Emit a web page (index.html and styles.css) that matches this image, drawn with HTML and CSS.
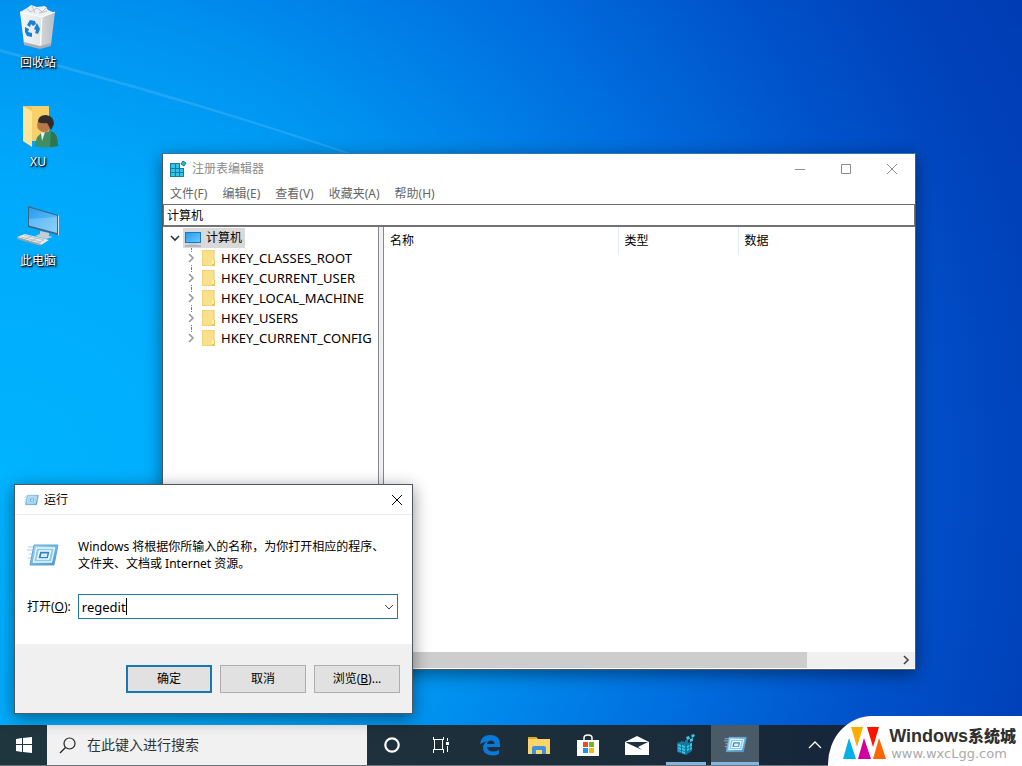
FILE: index.html
```html
<!DOCTYPE html>
<html lang="zh-CN">
<head>
<meta charset="utf-8">
<title>注册表编辑器</title>
<link rel="stylesheet" href="styles.css">
</head>
<body>
<svg class="defs" width="0" height="0" aria-hidden="true">
  <defs>
    <linearGradient id="screen" x1="0" y1="0" x2="1" y2="1"><stop offset="0" stop-color="#2a9df0"/><stop offset="1" stop-color="#6cc6fb"/></linearGradient>
    <linearGradient id="bin" x1="0" y1="0" x2="1" y2="0"><stop offset="0" stop-color="#f3f5f7"/><stop offset=".62" stop-color="#e3e6e9"/><stop offset=".64" stop-color="#cfd3d6"/><stop offset="1" stop-color="#b9bec2"/></linearGradient>
    <linearGradient id="runfill" x1="0" y1="0" x2="1" y2="1"><stop offset="0" stop-color="#a9dbf3"/><stop offset="1" stop-color="#3f93cf"/></linearGradient>
    <symbol id="run" viewBox="0 0 32 22">
      <path d="M1 3h7M0 6h6M2 10h5M1 14h4" stroke="#a5cfe8" stroke-width="1"/>
      <path d="M7 1h24l-4 20H3z" fill="url(#runfill)" stroke="#5ba6d6"/>
      <path d="M9.500 4h18l-3 14H6.500z" fill="#8cc8ea" stroke="#e9f7fd" stroke-width="1.300"/>
      <path d="M12.500 7h11l-2 8h-11z" fill="#2f86c6" stroke="#f2fbff" stroke-width="1.600"/>
      <path d="M14.500 9.500h6l-.8 3.500h-6z" fill="#d8f0fb"/>
    </symbol>
    <symbol id="folder" viewBox="0 0 14 16"><path d="M0 0h12v10h1v6H0z" fill="#fae08a"/><path d="M0 0h12v16H0z" fill="none" stroke="#ecc75f"/><path d="M10 10h3v6h-3z" fill="#eac558"/><path d="M10 10h2v4h-2z" fill="#fff0b0"/></symbol>
    <symbol id="cross" viewBox="0 0 12 12"><path d="M1 1l10 10M11 1L1 11" stroke="currentColor" fill="none"/></symbol>
    <symbol id="right" viewBox="0 0 8 10"><path d="M2 1l4 4-4 4" fill="none" stroke="currentColor" stroke-width="1.600"/></symbol>
    <symbol id="down" viewBox="0 0 10 8"><path d="M1 2l4 4 4-4" fill="none" stroke="currentColor" stroke-width="1.600"/></symbol>
  </defs>
</svg>

<main class="desktop">
  <svg class="beam" viewBox="0 0 500 200" width="500" height="200" aria-hidden="true"><path d="M0 49Q180 95 360 156L500 204 360 158Q180 98 0 52z" fill="#fff" opacity=".12"/></svg>

  <nav class="shortcuts" aria-label="桌面">
    <button class="shortcut">
      <svg width="42" height="46" viewBox="0 0 42 46">
        <path d="M3 8l7-4 4-3 6 2 8-1 3 4 7 3-4 7H8z" fill="#edf0f2"/><path d="M10 5l4 3 6-4 5 4 5-5M15 2l3 7M22 9l8-2" stroke="#bcc3c8" fill="none"/>
        <path d="M3 8l22 5 13-5-4 33-11 3-16-4z" fill="url(#bin)"/><path d="M3 8l22 5 13-5M25 13l-2 31" fill="none" stroke="#fff"/>
        <path d="M7 38l16 4 11-3v3l-11 3-16-4z" fill="#a9afb4"/>
        <g fill="#1681d4"><path d="M10 21l3-5 5 1 1 3-3 2-2-2-1 3z"/><path d="M20 19l3 6-2 5-3-1 1-3-2-1z"/><path d="M8 23l4 2-1 3 4 1v4l-5-1-2-4z"/></g>
      </svg>
      <span>回收站</span>
    </button>
    <button class="shortcut">
      <svg width="42" height="46" viewBox="0 0 42 46">
        <path d="M7 3h25v35H12z" fill="#f3c55c"/><path d="M6 3l9 5v36l-9-6z" fill="#ffe59a"/><path d="M15 8V3h17v35H15z" fill="#f8d06b"/>
        <path d="M18 43q1-12 9-14l7-1q7 2 7 15-12 3-23 0z" fill="#3f8f63"/><path d="M34 28q7 2 7 15l-8 1z" fill="#2f7550"/><path d="M24 30l4-1-3 9z" fill="#eef4f6"/>
        <circle cx="27" cy="22" r="7" fill="#b87849"/><path d="M21 19q0-7 8-7 8 1 8 9l-3 6-4-7q-5 1-9-1z" fill="#332c29"/>
      </svg>
      <span>XU</span>
    </button>
    <button class="shortcut">
      <svg width="44" height="46" viewBox="0 0 44 46">
        <path d="M12 4l30 9v20l-30-8z" fill="#3b6684"/><path d="M13 5.500l28 8.300v17.200L13 23.500z" fill="url(#screen)"/><path d="M13 17l28-2v16L13 23.500z" fill="#fff" opacity=".2"/><path d="M42 13l1 1v20l-1-1z" fill="#d5dde2"/>
        <path d="M24 29l9 2v3l4 1-7 2-11-3 5-2z" fill="#c5cdd2"/><path d="M1 35l8-3 24 6-8 5z" fill="#e8ebed"/><path d="M1 35l24 7v2L1 37z" fill="#9ba5ab"/><path d="M5 35l20 5M8 33l20 5M9 37l7-3M15 39l7-3M21 41l7-3" stroke="#a9b1b6" stroke-width=".7" fill="none"/>
      </svg>
      <span>此电脑</span>
    </button>
  </nav>

  <section class="window editor" aria-label="注册表编辑器">
    <header class="titlebar">
      <svg width="17" height="18" viewBox="0 0 17 18"><path d="M0 3h14v14H0z" fill="#137d9f"/><g fill="#35c4e8"><path d="M1 4h4v4H1zM6 4h3v4H6zM1 9h4v3H1zM6 9h3v3H6zM10 9h3v3h-3zM1 13h4v3H1zM6 13h3v3H6zM10 13h3v3h-3z"/></g><path d="M10 2h4v6h-4z" fill="#fff"/><path d="M13 1l3 2-2 3-3-2z" fill="#2db5d5" stroke="#137d8f"/></svg>
      <h1>注册表编辑器</h1>
      <div class="controls">
        <button aria-label="最小化"><svg width="12" height="12"><path d="M1 6.500h10" stroke="currentColor"/></svg></button>
        <button aria-label="最大化"><svg width="12" height="12"><path d="M1.500 1.500h9v9h-9z" fill="none" stroke="currentColor"/></svg></button>
        <button aria-label="关闭"><svg width="12" height="12"><use href="#cross"/></svg></button>
      </div>
    </header>
    <nav class="menu"><button>文件(F)</button><button>编辑(E)</button><button>查看(V)</button><button>收藏夹(A)</button><button>帮助(H)</button></nav>
    <input class="address" aria-label="地址" value="计算机">
    <div class="panes">
      <div class="tree">
        <div class="row root">
          <button class="toggle dark" aria-label="折叠"><svg width="10" height="8"><use href="#down"/></svg></button>
          <span class="selected"><svg width="18" height="17" viewBox="0 0 18 17"><path d="M1 2h16v11H1z" fill="#1679c4"/><path d="M2 3h14v9H2z" fill="url(#screen)"/><path d="M5 14h8" stroke="#a9c4d6"/><path d="M1 16h16" stroke="#8796a3"/></svg>计算机</span>
        </div>
        <ul>
          <li class="row"><button class="toggle" aria-label="展开"><svg width="8" height="10"><use href="#right"/></svg></button><svg width="14" height="16"><use href="#folder"/></svg><span>HKEY_CLASSES_ROOT</span></li>
          <li class="row"><button class="toggle" aria-label="展开"><svg width="8" height="10"><use href="#right"/></svg></button><svg width="14" height="16"><use href="#folder"/></svg><span>HKEY_CURRENT_USER</span></li>
          <li class="row"><button class="toggle" aria-label="展开"><svg width="8" height="10"><use href="#right"/></svg></button><svg width="14" height="16"><use href="#folder"/></svg><span>HKEY_LOCAL_MACHINE</span></li>
          <li class="row"><button class="toggle" aria-label="展开"><svg width="8" height="10"><use href="#right"/></svg></button><svg width="14" height="16"><use href="#folder"/></svg><span>HKEY_USERS</span></li>
          <li class="row"><button class="toggle" aria-label="展开"><svg width="8" height="10"><use href="#right"/></svg></button><svg width="14" height="16"><use href="#folder"/></svg><span>HKEY_CURRENT_CONFIG</span></li>
        </ul>
      </div>
      <div class="values">
        <table><thead><tr><th class="name">名称</th><th class="type">类型</th><th>数据</th></tr></thead></table>
        <div class="scrollbar"><span class="thumb"></span><button aria-label="向右滚动"><svg width="8" height="10"><use href="#right"/></svg></button></div>
      </div>
    </div>
  </section>

  <section class="window run" aria-label="运行">
    <header class="titlebar">
      <svg width="15" height="12"><use href="#run"/></svg>
      <h2>运行</h2>
      <div class="controls"><button aria-label="关闭"><svg width="12" height="12"><use href="#cross"/></svg></button></div>
    </header>
    <form class="form">
      <div class="intro"><svg width="32" height="22"><use href="#run"/></svg><p>Windows 将根据你所输入的名称，为你打开相应的程序、文件夹、文档或 Internet 资源。</p></div>
      <div class="open">
        <label for="command">打开(<u>O</u>):</label>
        <div class="combo"><input id="command" value="regedit"><span class="caret"></span><button type="button" aria-label="展开列表"><svg width="10" height="8" viewBox="0 0 10 8"><path d="M1 2l4 4 4-4" fill="none" stroke="currentColor"/></svg></button></div>
      </div>
    </form>
    <footer class="actions"><button class="primary">确定</button><button>取消</button><button>浏览(<u>B</u>)...</button></footer>
  </section>
</main>

<footer class="taskbar">
  <button class="start" aria-label="开始"><svg width="16" height="16" viewBox="0 0 16 16"><path d="M0 2l6-1v6H0zM7 1l9-1v7H7zM0 8h6v7l-6-1zM7 8h9v8l-9-1z" fill="#fff"/></svg></button>
  <label class="search"><svg width="17" height="17" viewBox="0 0 17 17"><circle cx="10.500" cy="6.500" r="5.500" fill="none" stroke="#222" stroke-width="1.200"/><path d="M6.500 10.500L1 16" stroke="#222" stroke-width="1.300"/></svg><input placeholder="在此键入进行搜索" aria-label="搜索"></label>
  <nav class="apps">
    <button aria-label="Cortana"><svg width="18" height="18"><circle cx="9" cy="9" r="6.700" fill="none" stroke="#fff" stroke-width="2.200"/></svg></button>
    <button aria-label="任务视图"><svg width="18" height="18" viewBox="0 0 18 18" fill="none" stroke="#fff"><path d="M1.500 1v2M11.500 1v2M1 3.500h11M2.500 4v9M10.500 4v9M1 13.500h11M1.500 14v3M11.500 14v3M15.500 2v3M15.500 10v6"/><path d="M14 6h3v3h-3z" fill="#fff" stroke="none"/></svg></button>
    <button class="edge" aria-label="Edge"><svg width="22" height="22" viewBox="0 0 22 22"><path d="M1 10Q2 1 11 1q10 0 10 9v3H8q1 4.500 6 4.500 3 0 6-1.500v4q-3 1.500-7 1.500Q4 21 4 13.500q0-4 4-6Q4 8 1 10zM8 10h7.500q0-3.500-3.500-3.500T8 10z" fill="#0b79d8" fill-rule="evenodd"/></svg></button>
    <button aria-label="文件资源管理器"><svg width="24" height="20" viewBox="0 0 24 20"><path d="M1 2h8l2 2h12v15H1z" fill="#fbd569"/><path d="M1 2h8l1 2H1z" fill="#e5a82c"/><path d="M5 19v-7l2-1h10l2 1v7h-4v-4H9v4z" fill="#3d91df"/></svg></button>
    <button aria-label="应用商店"><svg width="24" height="24" viewBox="0 0 24 24"><path d="M8 7V5q0-3 4-3t4 3v2" fill="none" stroke="#fff" stroke-width="1.500"/><path d="M1 7h22v16H1z" fill="#fff"/><path d="M7 9h5v5H7z" fill="#e74c22"/><path d="M13 9h5v5h-5z" fill="#7ab51d"/><path d="M7 15h5v5H7z" fill="#159be3"/><path d="M13 15h5v5h-5z" fill="#f9b912"/></svg></button>
    <button aria-label="邮件"><svg width="24" height="20" viewBox="0 0 24 20"><path d="M0 7l12-6 12 6v13H0z" fill="#fff"/><path d="M1 7h22l-10 5 4 3L2 8z" fill="#1d303f"/></svg></button>
    <button class="open-app" aria-label="注册表编辑器"><svg width="20" height="22" viewBox="0 0 20 22"><path d="M1 9l5-2 3 1V6h3v3l4-1v9l-6 4-9-3z" fill="#15779c"/><g fill="#3cc5eb"><path d="M2 10l3 1v2l-3-1zM6 11l3 1v2l-3-1zM2 13l3 1v2l-3-1zM6 14l3 1v2l-3-1zM2 16l3 1v1l-3-1zM6 17l3 1v2l-3-1zM11 12l2-1v2l-2 1zM14 10l2-1v3l-2 1zM11 15l2-1v2l-2 1zM14 14l2-1v2l-2 1zM10 3l3-1 1 3-3 1zM15 1l3-1 1 2-3 2zM14 5l3-1v3l-3 1z"/></g></svg></button>
    <button class="open-app active" aria-label="运行"><svg width="23" height="17"><use href="#run"/></svg></button>
  </nav>
  <button class="tray" aria-label="显示隐藏的图标"><svg width="14" height="8" viewBox="0 0 14 8"><path d="M1 7l6-6 6 6" fill="none" stroke="#fff" stroke-width="1.300"/></svg></button>
</footer>

<aside class="brand">
  <svg width="44" height="33" viewBox="0 0 44 33"><path d="M8 0h12l-6 20z" fill="#ffab00"/><path d="M24 0h12l-6 20z" fill="#fa1400"/><path d="M6 11L0 32h13z" fill="#04b0e8"/><path d="M21 11l-6 21h13z" fill="#d4009b"/><path d="M36 11l-6 21h13z" fill="#ff6500"/></svg>
  <div><strong>Windows<span>系统城</span></strong><small>www.wxcLgg.com</small></div>
</aside>
</body>
</html>
```
FILE: styles.css
```css
* { box-sizing: border-box; }

body {
  margin: 0;
  height: 100vh;
  overflow: hidden;
  position: relative;
  display: flex;
  flex-direction: column;
  font: 12px/16px "Noto Sans", "Noto Sans CJK SC", sans-serif;
  color: #000;
}

button, input { font: inherit; color: inherit; border: 0; padding: 0; background: none; border-radius: 0; outline: 0; }
button { display: flex; align-items: center; justify-content: center; }
h1, h2, p, ul { margin: 0; padding: 0; font-size: inherit; font-weight: normal; }
svg { display: block; flex: none; }
.defs { position: absolute; }

.desktop {
  flex: 1;
  min-height: 0;
  position: relative;
  background: radial-gradient(ellipse 115% 150% at 0% 65%, #00b4ff 0%, #00a8fb 28%, #0094f0 42%, #0070e0 60%, #0054cc 75%, #0040b8 90%, #003cb4 100%);
}

.beam { position: absolute; left: 0; top: 0; }

.shortcuts { position: relative; display: flex; flex-direction: column; gap: 28px; width: 76px; padding-top: 4px; }
.shortcut { flex-direction: column; justify-content: flex-start; gap: 5px; height: 71px; color: #fff; text-shadow: 1px 1px 1px #000, 1px 1px 3px #000; }

.window {
  position: absolute;
  display: flex;
  flex-direction: column;
  background: #fff;
  border: 1px solid #4d5a63;
  box-shadow: 0 4px 16px rgba(0, 0, 0, .45);
}

.titlebar { display: flex; align-items: center; height: 30px; }
.controls { display: flex; margin-left: auto; }
.controls button { width: 46px; height: 28px; }

.editor { left: 162px; right: 106px; top: 153px; bottom: 55px; border-top-color: #2b78b5; }
.editor .titlebar { padding-left: 7px; gap: 5px; color: #8c8c8c; }
.menu { display: flex; gap: 15px; height: 20px; padding-left: 7px; color: #666; }
.address { height: 23px; border: 1px solid #727272; border-bottom-width: 2px; padding: 0 3px; }
.panes { flex: 1; min-height: 0; display: flex; gap: 4px; background: #f0f0f0; }
.tree { width: 216px; padding-top: 1px; background: #fff; border-right: 1px solid #828790; }
.row { display: flex; align-items: center; height: 20px; }
.toggle { width: 12px; height: 16px; color: #999; background: #fff; }
.dark { color: #333; }
.root { padding-left: 6px; gap: 2px; }
.selected { display: flex; align-items: center; gap: 4px; height: 20px; padding: 0 3px 0 1px; background: #d9d9d9; }
.tree ul { list-style: none; padding-left: 22px; font-size: 13px; }
.tree li { gap: 5px; position: relative; }
.tree li::before { content: ""; position: absolute; left: 6px; top: 0; bottom: 0; border-left: 1px dotted #777; }
.tree li:last-child::before { bottom: 10px; }
.tree li .toggle { position: relative; height: 12px; }

.values { flex: 1; display: flex; flex-direction: column; justify-content: space-between; background: #fff; border-left: 1px solid #828790; }
.values table { border-collapse: collapse; width: 100%; table-layout: fixed; }
.values th { font-weight: normal; text-align: left; height: 28px; padding: 0 6px; border-right: 1px solid #e1edf5; }
.values th:last-child { border: 0; }
.name { width: 234px; }
.type { width: 120px; }
.scrollbar { display: flex; justify-content: space-between; height: 17px; padding-left: 17px; border-bottom: 1px solid #fff; background: #f0f0f0; color: #444; }
.thumb { width: 79%; background: #cdcdcd; }
.scrollbar button { width: 18px; }

.run { left: 14px; bottom: 11px; width: 399px; }
.run .titlebar { padding-left: 9px; gap: 5px; border-bottom: 1px solid #ececec; }
.run .controls button { width: 30px; }
.form { padding: 23px 14px 25px 12px; }
.intro { display: flex; align-items: center; gap: 19px; padding-right: 6px; margin-bottom: 22px; line-height: 17px; }
.intro p { flex: 1; }
.open { display: flex; align-items: center; gap: 7px; }
.combo { flex: 1; display: flex; align-items: center; height: 25px; border: 1px solid #1c7bac; padding-left: 3px; }
.combo input { field-sizing: content; font-size: 13px; }
.caret { width: 1px; height: 17px; background: #000; }
.combo button { margin-left: auto; width: 16px; color: #444; }
.actions { display: flex; justify-content: flex-end; gap: 8px; padding: 21px 12px 20px; background: #f0f0f0; }
.actions button { display: block; width: 86px; height: 28px; background: #e1e1e1; border: 1px solid #adadad; }
.actions .primary { border: 2px solid #1976ae; }

.taskbar { display: flex; height: 41px; background: linear-gradient(90deg, #20363f, #1c2d3a 60%, #12203c); border-bottom: 1px solid #6b7377; }
.start { width: 47px; }
.search { display: flex; align-items: center; gap: 11px; width: 320px; padding-left: 12px; background: #f1f1f1; }
.search input { flex: 1; min-width: 0; font-size: 14px; }
.search input::placeholder { color: #333; opacity: 1; }
.apps { display: flex; }
.apps button { width: 49px; border-bottom: 3px solid transparent; padding-top: 2px; }
.apps .open-app { border-bottom-color: #82b4e4; width: 40px; margin-left: 5px; }
.apps .active { width: 48px; background: #4a5a67; }
.tray { width: 32px; margin-left: 40px; }

.brand {
  position: absolute;
  right: 0;
  bottom: 0;
  display: flex;
  align-items: center;
  gap: 2px;
  height: 50px;
  padding: 4px 6px 0 15px;
  border-top-left-radius: 44px 48px;
  background: #fff;
  font-family: "Liberation Sans", "Noto Sans CJK SC", sans-serif;
}
.brand strong { display: block; font-size: 18px; line-height: 20px; color: #303030; white-space: nowrap; }
.brand strong span { font-size: 16px; font-weight: 900; }
.brand small { display: block; padding-left: 2px; font: 13px/14px "DejaVu Sans", sans-serif; color: #aaa; }
```
